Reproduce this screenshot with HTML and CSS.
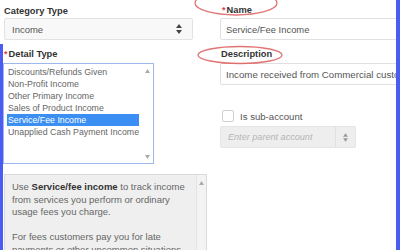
FILE: index.html
```html
<!DOCTYPE html>
<html lang="en">
<head>
  <meta charset="UTF-8" />
  <title>Account Details</title>
  <link rel="stylesheet" href="styles.css">
</head>
<body>

<div class="page">

  <!-- Left column: type pickers + help -->
  <div class="col-left">
    <div class="top-left">
      <div class="label">Category Type</div>
      <div class="select">
        <span>Income</span>
        <svg class="updown" width="6" height="10" viewBox="0 0 6 10"><path d="M3 0 L6 4 H0 Z M3 10 L0 6 H6 Z" fill="#444"/></svg>
      </div>
    </div>

    <div class="detail">
      <div class="label indent"><span class="req">*</span>Detail Type</div>
      <div class="listbox">
        <ul>
          <li>Discounts/Refunds Given</li>
          <li>Non-Profit Income</li>
          <li>Other Primary Income</li>
          <li>Sales of Product Income</li>
          <li class="selected">Service/Fee Income</li>
          <li>Unapplied Cash Payment Income</li>
        </ul>
        <div class="list-scroll">
          <svg width="5" height="4" viewBox="0 0 5 4"><path d="M2.5 0 L5 4 H0 Z" fill="#aaa"/></svg>
          <svg width="5" height="4" viewBox="0 0 5 4"><path d="M2.5 4 L0 0 H5 Z" fill="#aaa"/></svg>
        </div>
      </div>

      <div class="help">
        <div class="help-text">
          <p>Use <b>Service/fee income</b> to track income from services you perform or ordinary usage fees you charge.</p>
          <p>For fees customers pay you for late payments or other uncommon situations, use an Other Income account.</p>
        </div>
        <div class="help-scroll">
          <svg width="5" height="4" viewBox="0 0 5 4"><path d="M2.5 0 L5 4 H0 Z" fill="#aaa"/></svg>
        </div>
      </div>
    </div>
  </div>

  <!-- Right column: name, description, sub-account -->
  <div class="col-right">
    <div class="label indent2"><span class="req">*</span>Name</div>
    <div class="input first">Service/Fee Income</div>

    <div class="label desc">Description</div>
    <div class="input second">Income received from Commercial customers for services</div>

    <div class="check-row">
      <span class="checkbox"></span>
      <span>Is sub-account</span>
    </div>

    <div class="parent-select">
      <span class="placeholder">Enter parent account</span>
      <span class="parent-arrow">
        <svg width="5" height="9" viewBox="0 0 6 10"><path d="M3 0 L6 4 H0 Z M3 10 L0 6 H6 Z" fill="#999"/></svg>
      </span>
    </div>
  </div>

  <!-- red annotation circles drawn over the form -->
  <svg class="marks" width="396" height="250" viewBox="0 0 396 250">
    <ellipse cx="236" cy="3" rx="41" ry="12" />
    <ellipse cx="240" cy="55" rx="42" ry="8.5" />
  </svg>
</div>

</body>
</html>
```

FILE: styles.css
```css
body { margin: 0; background: #fff; font-family: "Liberation Sans", Arial, sans-serif; color: #333; }
.page { position: relative; width: 396px; height: 250px; border-right: 4px solid #4b5cf3; display: flex; overflow: hidden; }

.label { font-size: 9.3px; font-weight: bold; line-height: 12px; color: #333; }
.req { color: #d9463f; font-size: 9px; margin-right: 1px; }

/* left column */
.col-left { width: 207px; flex: none; }
.top-left { padding: 5px 0 0 4px; }
.select { box-sizing: border-box; width: 189px; height: 22px; margin-top: 1px; padding: 0 10px 0 7px; border: 1px solid #e2e2e2; border-radius: 2px; background: #f8f8f8; display: flex; align-items: center; justify-content: space-between; font-size: 9.5px; color: #555; }

.detail { margin-top: 4px; padding-top: 4px; height: 202px; border-left: 3px solid #4b5cf3; }
.indent { padding-left: 1px; }
.listbox { box-sizing: border-box; width: 151px; height: 101px; margin-top: 3px; border: 1px solid #9db8ea; display: flex; }
.listbox ul { list-style: none; margin: 0; padding: 2px 0 0 3px; flex: 1; }
.listbox li { width: 131px; padding-left: 1px; font-size: 8.8px; line-height: 12px; color: #666; white-space: nowrap; }
.listbox li.selected { background: #3b8ff3; color: #fff; }
.list-scroll { width: 12px; padding: 5px 0 4px; display: flex; flex-direction: column; justify-content: space-between; align-items: center; }

.help { box-sizing: border-box; width: 203px; height: 90px; margin: 10px 0 0 1px; border: 1px solid #dadada; background: #efefef; display: flex; }
.help-text { flex: 1; padding: 6px 2px 0 7px; font-size: 9.5px; line-height: 12.5px; color: #666; }
.help-text p { margin: 0 0 12.5px; }
.help-text b { color: #333; }
.help-scroll { width: 9px; padding-top: 6px; border-left: 1px solid #e4e4e4; background: #f3f3f3; display: flex; justify-content: center; align-items: flex-start; }

/* right column */
.col-right { width: 176px; margin-left: 13px; padding-top: 4px; overflow: hidden; }
.indent2 { padding-left: 2px; }
.input { box-sizing: border-box; width: 240px; height: 22px; padding: 0 5px; border: 1px solid #e0e0e0; border-radius: 2px; display: flex; align-items: center; font-size: 9.4px; color: #555; white-space: nowrap; overflow: hidden; }
.input.first { margin-top: 2px; }
.desc { margin-top: 8px; padding-left: 1px; }
.input.second { margin-top: 3px; font-size: 9.7px; }

.check-row { margin-top: 25px; padding-left: 2px; height: 12px; display: flex; align-items: center; gap: 6px; font-size: 9.6px; color: #555; }
.checkbox { box-sizing: border-box; width: 12px; height: 12px; border: 1px solid #cfcfcf; border-radius: 2px; background: #fff; }

.parent-select { box-sizing: border-box; width: 136px; height: 22px; margin-top: 4px; border: 1px solid #e4e4e4; border-radius: 2px; background: #eee; display: flex; }
.placeholder { flex: 1; padding-left: 7px; display: flex; align-items: center; font-size: 9.1px; font-style: italic; color: #b5b5b5; border-right: 1px solid #e0e0e0; }
.parent-arrow { width: 19px; display: flex; align-items: center; justify-content: center; }

.marks { position: absolute; top: 0; left: 0; pointer-events: none; }
.marks ellipse { fill: none; stroke: #dc5a5a; stroke-width: 1.3; opacity: 0.85; }
```
